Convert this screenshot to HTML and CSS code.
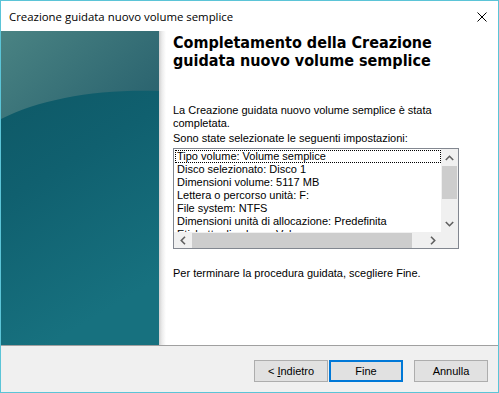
FILE: index.html
```html
<!DOCTYPE html>
<html lang="it">
<head>
<meta charset="utf-8">
<title>Creazione guidata nuovo volume semplice</title>
<link rel="stylesheet" href="styles.css">
</head>
<body>
<div class="window">
  <div class="titlebar">
    <span class="title">Creazione guidata nuovo volume semplice</span>
    <svg class="close" width="10" height="10" viewBox="0 0 10 10"><path d="M0.5 0.5 L9.5 9.5 M9.5 0.5 L0.5 9.5" stroke="#000" stroke-width="1" fill="none"/></svg>
  </div>
  <div class="main">
    <div class="side">
      <svg width="158" height="314" viewBox="0 0 158 314" preserveAspectRatio="none">
        <defs>
          <linearGradient id="dark" x1="0" y1="0" x2="0.3" y2="1">
            <stop offset="0" stop-color="#0d5562"/>
            <stop offset="0.5" stop-color="#10606f"/>
            <stop offset="1" stop-color="#17717f"/>
          </linearGradient>
          <linearGradient id="light" x1="0" y1="0" x2="1" y2="0.6">
            <stop offset="0" stop-color="#4a8383"/>
            <stop offset="1" stop-color="#2c6570"/>
          </linearGradient>
        </defs>
        <rect x="0" y="0" width="158" height="314" fill="url(#dark)"/>
        <path d="M0 0 L158 0 L158 60 C95 58 40 68 0 88 Z" fill="url(#light)"/>
      </svg>
    </div>
    <div class="content">
      <h1 class="heading">Completamento della Creazione<br>guidata nuovo volume semplice</h1>
      <p class="intro">La Creazione guidata nuovo volume semplice è stata completata.</p>
      <p class="label">Sono state selezionate le seguenti impostazioni:</p>
      <div class="listbox">
        <div class="lb-top">
          <div class="items">
            <div class="item focus">Tipo volume: Volume semplice</div>
            <div class="item">Disco selezionato: Disco 1</div>
            <div class="item">Dimensioni volume: 5117 MB</div>
            <div class="item">Lettera o percorso unità: F:</div>
            <div class="item">File system: NTFS</div>
            <div class="item">Dimensioni unità di allocazione: Predefinita</div>
            <div class="item">Etichetta di volume: Volume</div>
          </div>
          <div class="vscroll">
            <div class="arrow"><svg width="9" height="6" viewBox="0 0 9 6"><path d="M0.8 5 L4.5 1.3 L8.2 5" stroke="#606060" stroke-width="1.6" fill="none"/></svg></div>
            <div class="vtrack"><div class="vthumb"></div></div>
            <div class="arrow"><svg width="9" height="6" viewBox="0 0 9 6"><path d="M0.8 1 L4.5 4.7 L8.2 1" stroke="#606060" stroke-width="1.6" fill="none"/></svg></div>
          </div>
        </div>
        <div class="lb-bottom">
          <div class="hscroll">
            <div class="arrow"><svg width="6" height="9" viewBox="0 0 6 9"><path d="M5 0.8 L1.3 4.5 L5 8.2" stroke="#606060" stroke-width="1.6" fill="none"/></svg></div>
            <div class="htrack"><div class="hthumb"></div></div>
            <div class="arrow"><svg width="6" height="9" viewBox="0 0 6 9"><path d="M1 0.8 L4.7 4.5 L1 8.2" stroke="#606060" stroke-width="1.6" fill="none"/></svg></div>
          </div>
          <div class="corner"></div>
        </div>
      </div>
      <p class="finish">Per terminare la procedura guidata, scegliere Fine.</p>
    </div>
  </div>
  <div class="footer">
    <button class="btn">&lt; <u>I</u>ndietro</button>
    <button class="btn default">Fine</button>
    <button class="btn cancel">Annulla</button>
  </div>
</div>
</body>
</html>
```

FILE: styles.css
```css
html, body {
  margin: 0;
  padding: 0;
  background: #ffffff;
}

.window {
  box-sizing: border-box;
  width: 499px;
  height: 393px;
  border: 1px solid #5bc4d7;
  display: flex;
  flex-direction: column;
  background: #ffffff;
  font-family: "Liberation Sans", Arial, sans-serif;
  font-size: 11px;
  color: #000;
}

.titlebar {
  height: 30px;
  flex: none;
  display: flex;
  align-items: center;
  justify-content: space-between;
  padding: 0 11px 0 8px;
  background: #ffffff;
}

.title {
  font-family: "Open Sans", "Noto Sans", sans-serif;
  font-size: 11.4px;
  color: #000;
  padding-top: 1px;
}

.close {
  display: block;
  margin-top: 1px;
}

.main {
  height: 314px;
  flex: none;
  display: flex;
  border-bottom: 1px solid #a0a0a0;
}

.side {
  width: 158px;
  flex: none;
}

.side svg {
  display: block;
}

.content {
  flex: 1;
  padding: 3px 0 0 14px;
  background: linear-gradient(to right, #d0d0d0 0px, #ececec 3px, #ffffff 7px);
}

.heading {
  margin: 0;
  font-family: "DejaVu Sans", Verdana, sans-serif;
  font-stretch: condensed;
  font-weight: bold;
  font-size: 16px;
  line-height: 18px;
  color: #000;
}

.intro {
  margin: 34px 0 0;
  width: 286px;
  line-height: 13px;
}

.label {
  margin: 2px 0 0;
  line-height: 13px;
}

.listbox {
  margin-top: 3px;
  width: 286px;
  height: 101px;
  box-sizing: border-box;
  border: 1px solid #828790;
  display: flex;
  flex-direction: column;
  background: #fff;
}

.lb-top {
  height: 83px;
  flex: none;
  display: flex;
}

.items {
  flex: 1;
  overflow: hidden;
  padding: 1px 0 0 1px;
}

.item {
  line-height: 13px;
  height: 13px;
  padding-left: 2px;
  white-space: nowrap;
}

.item.focus {
  outline: 1px dotted #000;
  outline-offset: -1px;
}

.vscroll {
  width: 17px;
  flex: none;
  display: flex;
  flex-direction: column;
  background: #f0f0f0;
}

.arrow {
  width: 17px;
  height: 17px;
  flex: none;
  display: flex;
  align-items: center;
  justify-content: center;
}

.hscroll .arrow {
  height: 16px;
}

.arrow svg {
  display: block;
}

.vtrack {
  flex: 1;
}

.vthumb {
  width: 15px;
  margin-left: 1px;
  height: 33px;
  background: #cdcdcd;
}

.lb-bottom {
  height: 16px;
  flex: none;
  display: flex;
}

.hscroll {
  flex: 1;
  display: flex;
  background: #f0f0f0;
}

.htrack {
  flex: 1;
  display: flex;
  align-items: flex-end;
}

.hthumb {
  width: 220px;
  height: 15px;
  margin-left: 1px;
  background: #cdcdcd;
}

.corner {
  width: 17px;
  background: #f0f0f0;
}

.finish {
  margin: 18px 0 0;
  line-height: 13px;
}

.footer {
  flex: 1;
  background: #f0f0f0;
  display: flex;
  justify-content: flex-end;
  align-items: flex-start;
  padding: 14px 10px 0 0;
}

.btn {
  box-sizing: border-box;
  width: 74px;
  height: 22px;
  margin: 0 0 0 1px;
  padding: 0;
  border: 1px solid #adadad;
  background: #e1e1e1;
  font-family: "Liberation Sans", Arial, sans-serif;
  font-size: 11px;
  color: #000;
}

.btn.default {
  border: 2px solid #0078d7;
}

.btn.cancel {
  margin-left: 11px;
}
```
